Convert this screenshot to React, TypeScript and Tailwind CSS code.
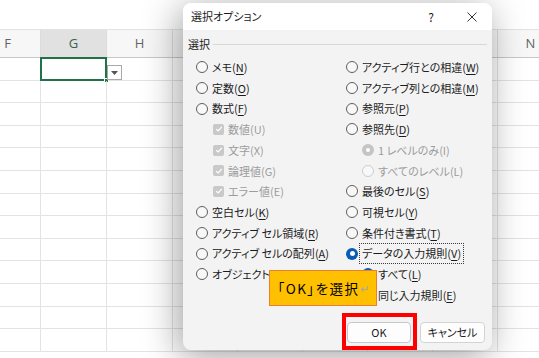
import React from "react";

const JP = "font-['Noto_Sans_CJK_JP',sans-serif] [font-feature-settings:'palt']";

const cols = [
  { k: "F", w: "w-[66px]" },
  { k: "G", w: "w-[66px]" },
  { k: "H", w: "w-[66px]" },
  { k: "I", w: "w-[65px]" },
  { k: "J", w: "w-[65px]" },
  { k: "K", w: "w-[65px]" },
  { k: "L", w: "w-[65px]" },
  { k: "M", w: "w-[65px]" },
  { k: "N", w: "w-[66px]" },
];

const shownHeaders = ["F", "G", "H", "N"];

type Item = {
  kind: "radio" | "check" | "sub" | "none";
  text?: string;
  k?: string;
  checked?: boolean;
  disabled?: boolean;
  focus?: boolean;
};

const leftItems: Item[] = [
  { kind: "radio", text: "メモ", k: "N" },
  { kind: "radio", text: "定数", k: "O" },
  { kind: "radio", text: "数式", k: "F" },
  { kind: "check", text: "数値", k: "U", checked: true, disabled: true },
  { kind: "check", text: "文字", k: "X", checked: true, disabled: true },
  { kind: "check", text: "論理値", k: "G", checked: true, disabled: true },
  { kind: "check", text: "エラー値", k: "E", checked: true, disabled: true },
  { kind: "radio", text: "空白セル", k: "K" },
  { kind: "radio", text: "アクティブ セル領域", k: "R" },
  { kind: "radio", text: "アクティブ セルの配列", k: "A" },
  { kind: "radio", text: "オブジェクト", k: "B" },
  { kind: "none" },
];

const rightItems: Item[] = [
  { kind: "radio", text: "アクティブ行との相違", k: "W" },
  { kind: "radio", text: "アクティブ列との相違", k: "M" },
  { kind: "radio", text: "参照元", k: "P" },
  { kind: "radio", text: "参照先", k: "D" },
  { kind: "sub", text: "1 レベルのみ", k: "I", checked: true, disabled: true },
  { kind: "sub", text: "すべてのレベル", k: "L", disabled: true },
  { kind: "radio", text: "最後のセル", k: "S" },
  { kind: "radio", text: "可視セル", k: "Y" },
  { kind: "radio", text: "条件付き書式", k: "T" },
  { kind: "radio", text: "データの入力規則", k: "V", checked: true, focus: true },
  { kind: "sub", text: "すべて", k: "L", checked: true },
  { kind: "sub", text: "同じ入力規則", k: "E" },
];

function RadioDot({ checked, disabled }: { checked?: boolean; disabled?: boolean }) {
  if (checked && disabled) {
    return (
      <span className="w-3 h-3 shrink-0 rounded-full bg-[#c4c4c4] flex items-center justify-center">
        <span className="w-[4px] h-[4px] rounded-full bg-white" />
      </span>
    );
  }
  if (checked) {
    return (
      <span className="w-3 h-3 shrink-0 rounded-full bg-[#0a5bb4] flex items-center justify-center">
        <span className="w-[5px] h-[5px] rounded-full bg-white" />
      </span>
    );
  }
  return (
    <span
      className={`w-3 h-3 shrink-0 rounded-full border bg-[#f8f8f8] ${
        disabled ? "border-[#cdcdcd]" : "border-[#5e5e5e]"
      }`}
    />
  );
}

function CheckBox() {
  return (
    <span className="w-[11px] h-[11px] shrink-0 rounded-[2px] bg-[#c9c9c9] flex items-center justify-center">
      <svg width="8" height="8" viewBox="0 0 8 8">
        <path d="M1.2 4.2 L3.2 6 L6.8 1.8" fill="none" stroke="#fff" strokeWidth="1.2" />
      </svg>
    </span>
  );
}

function Label({ item }: { item: Item }) {
  const body = item.disabled ? (
    <>
      {item.text}({item.k})
    </>
  ) : (
    <>
      {item.text}(<span className="underline underline-offset-[2px] decoration-[0.5px]">{item.k}</span>)
    </>
  );
  if (item.focus) {
    return (
      <span className="ml-[1px] px-[2px] py-[1px] border border-dotted border-[#3a3a3a] whitespace-nowrap text-[#1b1b1b]">
        {body}
      </span>
    );
  }
  return (
    <span className={`ml-[4px] whitespace-nowrap ${item.disabled ? "text-[#9c9c9c]" : "text-[#1b1b1b]"}`}>
      {body}
    </span>
  );
}

function Row({ item }: { item: Item }) {
  if (item.kind === "none") return <div className="h-[20.7px]" />;
  return (
    <div className="h-[20.7px] flex items-center">
      {item.kind === "check" && (
        <>
          <span className="w-[17px] shrink-0" />
          <CheckBox />
        </>
      )}
      {item.kind === "sub" && (
        <>
          <span className="w-[16px] shrink-0" />
          <RadioDot checked={item.checked} disabled={item.disabled} />
        </>
      )}
      {item.kind === "radio" && <RadioDot checked={item.checked} disabled={item.disabled} />}
      <Label item={item} />
    </div>
  );
}

function Sheet() {
  const rows = Array.from({ length: 13 }, (_, i) => i);
  return (
    <div className="flex flex-col">
      <div className="h-[30px] bg-white border-b border-[#e3e3e3]" />
      <div className="flex h-[28px] -ml-[25px] bg-[#f7f7f7] border-b border-[#c8c8c8]">
        {cols.map((c) => (
          <div
            key={c.k}
            className={`${c.w} shrink-0 border-r border-[#dcdcdc] flex items-center justify-center text-[13px] font-['Open_Sans',sans-serif] ${
              c.k === "G" ? "bg-[#e1e1e1] text-[#3d5f4c]" : "text-[#636363]"
            }`}
          >
            {shownHeaders.includes(c.k) ? c.k : ""}
          </div>
        ))}
      </div>
      {rows.map((r) => (
        <div key={r} className="flex h-[22.6px] -ml-[25px] border-b border-[#e3e3e3] bg-white">
          {cols.map((c) => (
            <div key={c.k} className={`${c.w} shrink-0 border-r border-[#e3e3e3] relative`}>
              {r === 0 && c.k === "G" && (
                <>
                  <div className="absolute -top-px -left-px -right-px -bottom-px border-2 border-[#1f7346]" />
                  <div className="absolute -right-[3px] -bottom-[3px] w-[5px] h-[5px] bg-[#1f7346] border border-white" />
                </>
              )}
            </div>
          ))}
        </div>
      ))}
    </div>
  );
}

export default function App() {
  return (
    <div className="relative w-[539px] h-[358px] overflow-hidden bg-white">
      <Sheet />

      {/* data validation drop-down on the active cell */}
      <div className="absolute left-[107px] top-[65px] w-[15px] h-[15px] bg-white border border-[#a9a9a9] flex items-center justify-center">
        <svg width="7" height="4" viewBox="0 0 7 4">
          <path d="M0 0 H7 L3.5 4 Z" fill="#555" />
        </svg>
      </div>

      {/* 選択オプション dialog */}
      <div
        className={`absolute left-[183px] top-[3px] w-[309px] h-[347px] rounded-[8px] overflow-hidden bg-[#f3f3f3] shadow-[-4px_6px_36px_rgba(0,0,0,0.38)] flex flex-col text-[11px] ${JP}`}
      >
        <div className="h-[27px] bg-white flex items-center pl-[8px] text-[#1b1b1b]">
          <span>選択オプション</span>
          <div className="ml-auto flex items-center">
            <span className="w-[26px] text-center text-[12px]">?</span>
            <span className="w-[8px]" />
            <span className="w-[40px] flex items-center justify-center">
              <svg width="10" height="10" viewBox="0 0 10 10">
                <path d="M0.5 0.5 L9.5 9.5 M9.5 0.5 L0.5 9.5" stroke="#333" strokeWidth="1" />
              </svg>
            </span>
          </div>
        </div>

        <div className="flex items-center h-[20px] mt-[4px] px-[5px] text-[#1b1b1b]">
          <span>選択</span>
          <div className="flex-1 h-px bg-[#d8d8d8] ml-[3px]" />
        </div>

        <div className="flex mt-[3px] pl-[13px]">
          <div className="w-[150px] flex flex-col">
            {leftItems.map((it, i) => (
              <Row key={i} item={it} />
            ))}
          </div>
          <div className="flex flex-col">
            {rightItems.map((it, i) => (
              <Row key={i} item={it} />
            ))}
          </div>
        </div>

        <div className="mt-auto flex justify-end gap-[9px] pr-[7px] pb-[7px]">
          <button className="w-[64px] h-[21px] rounded-[4px] bg-[#fdfdfd] border border-[#c3c8cf] text-[11px] text-[#1b1b1b]">
            OK
          </button>
          <button className="w-[65px] h-[21px] rounded-[4px] bg-[#fdfdfd] border border-[#d3d3d3] text-[11px] text-[#1b1b1b]">
            キャンセル
          </button>
        </div>

        {/* callout */}
        <div className="absolute left-[86px] top-[267px] w-[108px] h-[36px] bg-[#ffc000] border border-[#ed7d31] flex items-center justify-center text-[13.5px] text-black">
          <span className="tracking-[1.5px]">「OK」を選択</span>
          <span className="text-[11px] text-[#a8a8a8]">↵</span>
        </div>

        {/* red highlight */}
        <div className="absolute left-[159px] top-[310px] w-[75px] h-[37px] border-4 border-[#ff0000]" />
      </div>
    </div>
  );
}
